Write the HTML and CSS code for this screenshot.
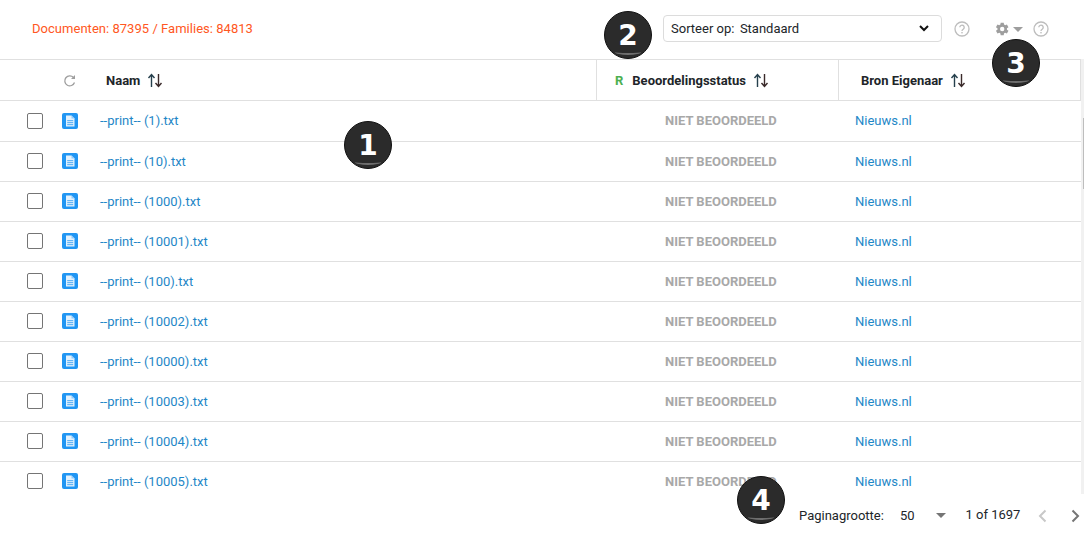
FILE: index.html
```html
<!DOCTYPE html>
<html lang="en">
<head>
    <meta charset="UTF-8">
    <title>Documenten</title>
    <link rel="stylesheet" href="styles.css">
</head>
<body>
    <svg class="defs" width="0" height="0">
        <symbol id="sort" viewBox="0 0 16 15">
            <path d="M4.500 14V2M1.500 5 4.500 1.500 7.500 5" fill="none" stroke="#26404d" stroke-width="1.400"/>
            <path d="M11.500 1v12M8.500 10l3 3.500 3-3.500" fill="none" stroke="#3a2a2a" stroke-width="1.400"/>
        </symbol>
        <symbol id="help" viewBox="0 0 16 16">
            <circle cx="8" cy="8" r="7" fill="none" stroke="#bdbdbd" stroke-width="1.300"/>
            <path d="M5.800 6.300a2.200 2.200 0 1 1 3.400 1.900C8.400 8.700 8 9.100 8 10" fill="none" stroke="#bdbdbd" stroke-width="1.300"/>
            <rect x="7.300" y="11" width="1.400" height="1.400" fill="#bdbdbd"/>
        </symbol>
        <symbol id="doc" viewBox="0 0 16 16">
            <rect width="16" height="16" rx="2" fill="#2196f3"/>
            <path d="M4 2.500h5.500L12.500 5.500V13.500H4z" fill="#e3f2fd"/>
            <path d="M9.500 2.500V5.500H12.500z" fill="#90caf9"/>
            <rect x="5.200" y="7" width="6" height="1.200" fill="#64b5f6"/>
            <rect x="5.200" y="9" width="6" height="1.200" fill="#64b5f6"/>
            <rect x="5.200" y="11" width="6" height="1.200" fill="#64b5f6"/>
        </symbol>
    </svg>

    <div class="topbar">
        <span class="counts">Documenten: 87395 / Families: 84813</span>
        <div class="topbar-right">
            <div class="sort-select">
                <span><span class="sort-label">Sorteer op:</span>Standaard</span>
                <svg width="10" height="7" viewBox="0 0 10 7"><path d="M1 1l4 4 4-4" fill="none" stroke="#111" stroke-width="2"/></svg>
            </div>
            <svg class="help-one" width="16" height="16"><use href="#help"/></svg>
            <div class="settings">
                <svg width="16" height="16" viewBox="0 0 24 24"><path fill="#9e9e9e" d="M19.400 13a7.500 7.500 0 0 0 0-2l2.300-1.800-2.300-3.900-2.700 1.100a7.600 7.600 0 0 0-1.700-1L14.600 2.500H10L9.600 5.400a7.600 7.600 0 0 0-1.700 1L5.200 5.300 2.900 9.200 5.200 11a7.500 7.500 0 0 0 0 2l-2.300 1.800 2.300 3.900 2.700-1.100a7.600 7.600 0 0 0 1.700 1l.4 2.900h4.600l.4-2.900a7.600 7.600 0 0 0 1.700-1l2.700 1.100 2.300-3.900zM12.300 15.300a3.300 3.300 0 1 1 0-6.600 3.300 3.300 0 0 1 0 6.600z"/></svg>
                <span class="caret"></span>
            </div>
            <svg class="help-two" width="16" height="16"><use href="#help"/></svg>
        </div>
    </div>

    <div class="grid">
        <div class="grid-main">
            <div class="grid-head">
                <div class="head-cell col-check"></div>
                <div class="head-cell col-icon">
                    <svg width="14" height="14" viewBox="0 0 14 14"><path d="M11.500 8.500A5 5 0 1 1 10.500 3.500" fill="none" stroke="#9e9e9e" stroke-width="1.300"/><path d="M12 1v4H8z" fill="#9e9e9e"/></svg>
                </div>
                <div class="head-cell col-name">Naam <svg class="sort-icon" width="16" height="15"><use href="#sort"/></svg></div>
                <div class="head-cell col-status"><span class="r-mark">R</span> Beoordelingsstatus <svg class="sort-icon" width="16" height="15"><use href="#sort"/></svg></div>
                <div class="head-cell col-owner">Bron Eigenaar <svg class="sort-icon" width="16" height="15"><use href="#sort"/></svg></div>
            </div>

            <div class="grid-body">
                <div class="row first"><div class="col-check"><span class="checkbox"></span></div><div class="col-icon"><svg width="16" height="16"><use href="#doc"/></svg></div><div class="col-name"><a>--print-- (1).txt</a></div><div class="col-status status">NIET BEOORDEELD</div><div class="col-owner"><a>Nieuws.nl</a></div></div>
                <div class="row"><div class="col-check"><span class="checkbox"></span></div><div class="col-icon"><svg width="16" height="16"><use href="#doc"/></svg></div><div class="col-name"><a>--print-- (10).txt</a></div><div class="col-status status">NIET BEOORDEELD</div><div class="col-owner"><a>Nieuws.nl</a></div></div>
                <div class="row"><div class="col-check"><span class="checkbox"></span></div><div class="col-icon"><svg width="16" height="16"><use href="#doc"/></svg></div><div class="col-name"><a>--print-- (1000).txt</a></div><div class="col-status status">NIET BEOORDEELD</div><div class="col-owner"><a>Nieuws.nl</a></div></div>
                <div class="row"><div class="col-check"><span class="checkbox"></span></div><div class="col-icon"><svg width="16" height="16"><use href="#doc"/></svg></div><div class="col-name"><a>--print-- (10001).txt</a></div><div class="col-status status">NIET BEOORDEELD</div><div class="col-owner"><a>Nieuws.nl</a></div></div>
                <div class="row"><div class="col-check"><span class="checkbox"></span></div><div class="col-icon"><svg width="16" height="16"><use href="#doc"/></svg></div><div class="col-name"><a>--print-- (100).txt</a></div><div class="col-status status">NIET BEOORDEELD</div><div class="col-owner"><a>Nieuws.nl</a></div></div>
                <div class="row"><div class="col-check"><span class="checkbox"></span></div><div class="col-icon"><svg width="16" height="16"><use href="#doc"/></svg></div><div class="col-name"><a>--print-- (10002).txt</a></div><div class="col-status status">NIET BEOORDEELD</div><div class="col-owner"><a>Nieuws.nl</a></div></div>
                <div class="row"><div class="col-check"><span class="checkbox"></span></div><div class="col-icon"><svg width="16" height="16"><use href="#doc"/></svg></div><div class="col-name"><a>--print-- (10000).txt</a></div><div class="col-status status">NIET BEOORDEELD</div><div class="col-owner"><a>Nieuws.nl</a></div></div>
                <div class="row"><div class="col-check"><span class="checkbox"></span></div><div class="col-icon"><svg width="16" height="16"><use href="#doc"/></svg></div><div class="col-name"><a>--print-- (10003).txt</a></div><div class="col-status status">NIET BEOORDEELD</div><div class="col-owner"><a>Nieuws.nl</a></div></div>
                <div class="row"><div class="col-check"><span class="checkbox"></span></div><div class="col-icon"><svg width="16" height="16"><use href="#doc"/></svg></div><div class="col-name"><a>--print-- (10004).txt</a></div><div class="col-status status">NIET BEOORDEELD</div><div class="col-owner"><a>Nieuws.nl</a></div></div>
                <div class="row last"><div class="col-check"><span class="checkbox"></span></div><div class="col-icon"><svg width="16" height="16"><use href="#doc"/></svg></div><div class="col-name"><a>--print-- (10005).txt</a></div><div class="col-status status">NIET BEOORDEELD</div><div class="col-owner"><a>Nieuws.nl</a></div></div>
            </div>
        </div>
        <div class="scrollbar"><div class="scroll-thumb"></div></div>
    </div>

    <div class="pager">
        <span class="page-label">Paginagrootte:</span>
        <span class="page-size">50</span>
        <span class="caret pager-caret"></span>
        <span class="page-range">1 of 1697</span>
        <svg class="page-prev" width="9" height="14" viewBox="0 0 9 14"><path d="M7.500 1.500 2 7l5.500 5.500" fill="none" stroke="#c8c8c8" stroke-width="2"/></svg>
        <svg class="page-next" width="9" height="14" viewBox="0 0 9 14"><path d="M1.500 1.500 7 7l-5.500 5.500" fill="none" stroke="#757575" stroke-width="2"/></svg>
    </div>

    <span class="callout callout-1">1</span>
    <span class="callout callout-2">2</span>
    <span class="callout callout-3">3</span>
    <span class="callout callout-4">4</span>
</body>
</html>
```

FILE: styles.css
```css
html, body {
    margin: 0;
    height: 541px;
    overflow: hidden;
}
body {
    font-family: Roboto, Arial, sans-serif;
    font-size: 13px;
    color: #212529;
    background-color: white;
    position: relative;
}
.defs {
    display: block;
    height: 0;
}
.topbar {
    height: 57px;
    padding-bottom: 2px;
    display: flex;
    align-items: center;
    justify-content: space-between;
    padding-left: 32px;
}
.counts {
    color: #ff5722;
    letter-spacing: 0.03px;
}
.topbar-right {
    display: flex;
    align-items: center;
}
.sort-select {
    width: 279px;
    height: 27px;
    box-sizing: border-box;
    border: 1px solid #dcdcdc;
    border-radius: 4px;
    padding: 0 12px 0 7px;
    display: flex;
    align-items: center;
    justify-content: space-between;
}
.sort-label {
    margin-right: 5.500px;
}
.help-one {
    margin-left: 12px;
    margin-top: 1px;
}
.settings {
    display: flex;
    align-items: center;
    gap: 3px;
    margin-left: 24px;
    margin-top: 1px;
}
.caret {
    width: 0;
    height: 0;
    border-left: 5px solid transparent;
    border-right: 5px solid transparent;
    border-top: 5px solid #9e9e9e;
}
.help-two {
    margin-left: 10px;
    margin-right: 35px;
    margin-top: 1px;
}
.grid {
    height: 435px;
    display: flex;
}
.grid-main {
    flex: 1;
    min-width: 0;
}
.scrollbar {
    width: 3px;
    flex: none;
    background-color: #f1f1f1;
}
.scroll-thumb {
    width: 1px;
    height: 71px;
    margin: 59px 0 0 2px;
    background-color: #bdbdbd;
}
.grid-head {
    height: 42px;
    box-sizing: border-box;
    border-top: 1px solid #e0e0e0;
    border-bottom: 1px solid #e0e0e0;
    border-right: 1px solid #e0e0e0;
    display: flex;
    font-size: 13px;
    font-weight: 700;
}
.head-cell {
    display: flex;
    align-items: center;
    gap: 7px;
    padding-top: 1px;
}
.col-check {
    width: 54px;
    flex: none;
    display: flex;
    align-items: center;
    justify-content: center;
    padding-left: 15px;
    box-sizing: border-box;
}
.col-icon {
    width: 32px;
    flex: none;
    display: flex;
    align-items: center;
    justify-content: center;
}
.col-name {
    width: 511px;
    flex: none;
    box-sizing: border-box;
}
.grid-head .col-name {
    padding-left: 20px;
    border-right: 1px solid #e0e0e0;
}
.grid-head .col-status {
    width: 242px;
    box-sizing: border-box;
    padding-left: 18px;
    border-right: 1px solid #e0e0e0;
}
.col-status {
    width: 242px;
    flex: none;
}
.grid-head .col-owner {
    padding-left: 22px;
}
.r-mark {
    color: #4caf50;
    margin-right: 2px;
}
.grid-body {
    height: 393px;
    overflow: hidden;
}
.row {
    height: 40px;
    box-sizing: border-box;
    border-bottom: 1px solid #e0e0e0;
    display: flex;
    align-items: center;
}
.row .checkbox,
.row svg {
    margin-bottom: 1px;
}
.row.first {
    height: 41px;
    padding-bottom: 2px;
}
.row.first .checkbox,
.row.first svg {
    margin-top: 2px;
    margin-bottom: 0;
}
.row.last {
    border-bottom: none;
    padding-bottom: 1px;
}
.row .col-name {
    padding-left: 14px;
}
.row a {
    color: #1f87c7;
}
.status {
    font-size: 13px;
    font-weight: 700;
    color: #a8a8a8;
    padding-left: 68px;
    box-sizing: border-box;
}
.row .col-owner {
    padding-left: 16px;
}
.checkbox {
    width: 14px;
    height: 14px;
    display: block;
    border: 1px solid #757575;
    border-radius: 2px;
}
.pager {
    height: 42px;
    display: flex;
    align-items: center;
    padding-left: 799px;
    font-size: 13px;
}
.page-size {
    margin-left: 16px;
}
.pager-caret {
    margin-left: 21px;
    border-top-color: #757575;
}
.page-range {
    margin-left: 20px;
    margin-top: -2px;
}
.page-prev {
    margin-left: 18px;
    margin-top: 2px;
}
.page-next {
    margin-left: 24px;
    margin-top: 2px;
}
.callout {
    position: absolute;
    width: 48px;
    height: 48px;
    box-sizing: border-box;
    border: 1px solid #111;
    border-radius: 50%;
    background-color: #2b2b2b;
    color: white;
    font-family: "DejaVu Sans", sans-serif;
    font-size: 28px;
    font-weight: 700;
    text-align: center;
    line-height: 48px;
}
.callout::after {
    content: "";
    position: absolute;
    left: 10px;
    bottom: 3px;
    width: 26px;
    height: 6px;
    box-sizing: border-box;
    border-bottom: 2px solid #6e6e6e;
    border-radius: 50%;
}
.callout-1 { left: 344px; top: 121px; }
.callout-2 { left: 604px; top: 11px; }
.callout-3 { left: 992px; top: 39px; }
.callout-4 { left: 737px; top: 476px; }
```
